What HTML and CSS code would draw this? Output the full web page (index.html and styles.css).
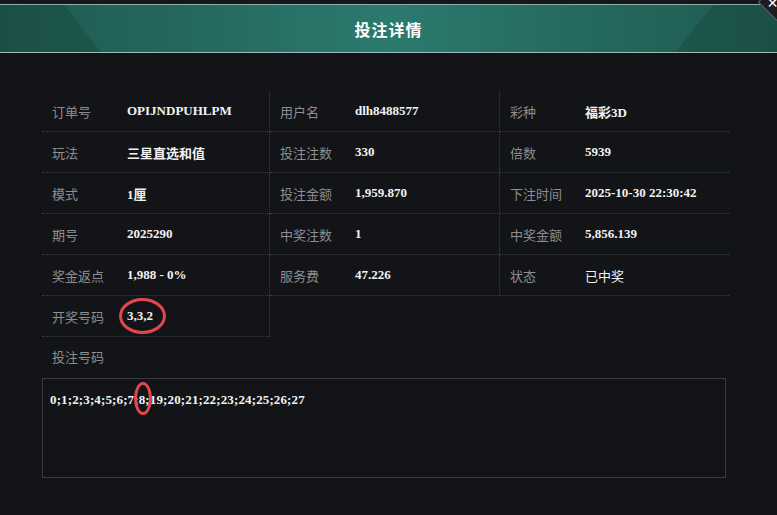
FILE: index.html
```html
<!DOCTYPE html>
<html lang="zh">
<head>
<meta charset="utf-8">
<title>投注详情</title>
<link rel="stylesheet" href="styles.css">
</head>
<body>
<div class="dialog">
  <div class="topstrip"></div>
  <header class="head">
    <span class="deco deco-l"></span>
    <span class="deco deco-r"></span>
    <h1 class="title">投注详情</h1>
  </header>
  <button class="close" aria-label="关闭"><span class="close-x">✕</span></button>

  <main class="body">
    <div class="grid">
      <div class="cell"><span class="lbl">订单号</span><span class="val">OPIJNDPUHLPM</span></div>
      <div class="cell"><span class="lbl">用户名</span><span class="val">dlh8488577</span></div>
      <div class="cell last"><span class="lbl">彩种</span><span class="val">福彩3D</span></div>

      <div class="cell"><span class="lbl">玩法</span><span class="val cjk">三星直选和值</span></div>
      <div class="cell"><span class="lbl">投注注数</span><span class="val">330</span></div>
      <div class="cell last"><span class="lbl">倍数</span><span class="val">5939</span></div>

      <div class="cell"><span class="lbl">模式</span><span class="val">1厘</span></div>
      <div class="cell"><span class="lbl">投注金额</span><span class="val">1,959.870</span></div>
      <div class="cell last"><span class="lbl">下注时间</span><span class="val">2025-10-30 22:30:42</span></div>

      <div class="cell"><span class="lbl">期号</span><span class="val">2025290</span></div>
      <div class="cell"><span class="lbl">中奖注数</span><span class="val">1</span></div>
      <div class="cell last"><span class="lbl">中奖金额</span><span class="val">5,856.139</span></div>

      <div class="cell"><span class="lbl">奖金返点</span><span class="val">1,988 - 0%</span></div>
      <div class="cell"><span class="lbl">服务费</span><span class="val">47.226</span></div>
      <div class="cell last"><span class="lbl">状态</span><span class="val status">已中奖</span></div>

      <div class="cell"><span class="lbl">开奖号码</span><span class="val mark-wrap">3,3,2<span class="ring ring-a"></span></span></div>
    </div>

    <div class="nums-label">投注号码</div>
    <div class="nums-box">
      <span class="nums">0;1;2;3;4;5;6;7;<span class="mark-wrap">8<span class="ring ring-b"></span></span>;19;20;21;22;23;24;25;26;27</span>
    </div>
  </main>
</div>
</body>
</html>
```

FILE: styles.css
```css
* { box-sizing: border-box; }
html, body {
  margin: 0;
  padding: 0;
  background: #121417;
  width: 777px;
  height: 515px;
  overflow: hidden;
}
body {
  font-family: "Noto Sans CJK SC", "Noto Sans", sans-serif;
}
.dialog {
  position: relative;
  width: 777px;
  height: 515px;
  background: #121417;
}
.topstrip {
  height: 4px;
  background: #16171d;
}
.head {
  position: relative;
  height: 49px;
  border-top: 1px solid #8fb0aa;
  border-bottom: 1px solid #9fb8b3;
  background: linear-gradient(to right, #1f5a51 0%, #24655b 20%, #2b7a6e 50%, #24665b 80%, #1f5a51 100%);
  display: flex;
  align-items: center;
  justify-content: center;
  overflow: hidden;
}
.deco {
  position: absolute;
  top: 0;
  bottom: 0;
  width: 110px;
  background: rgba(10, 40, 35, 0.2);
}
.deco-l {
  left: 0;
  clip-path: polygon(0 0, 64px 0, 101px 100%, 0 100%);
}
.deco-r {
  right: 0;
  clip-path: polygon(9px 100%, 46px 0, 110px 0, 110px 100%);
}
.title {
  position: relative;
  margin: 0;
  font-size: 16px;
  font-weight: 700;
  color: #ffffff;
  letter-spacing: 1px;
}
.close {
  position: absolute;
  top: -13px;
  right: -17px;
  width: 30px;
  height: 30px;
  padding: 0;
  transform: rotate(45deg);
  background: #1b1d22;
  border: 1px solid #5e6468;
  cursor: pointer;
}
.close-x {
  position: absolute;
  left: 4px;
  bottom: 2px;
  transform: rotate(-45deg);
  color: #ffffff;
  font-size: 14px;
  line-height: 1;
  font-family: "DejaVu Sans", sans-serif;
}

.body {
  padding: 38px 48px 0 42px;
}
.grid {
  display: grid;
  grid-template-columns: 228px 230px 229px;
  grid-auto-rows: 41px;
}
.cell {
  display: flex;
  align-items: center;
  padding-left: 10px;
  border-bottom: 1px dotted #3c3f44;
  border-right: 1px dotted #3c3f44;
}
.cell.last {
  border-right: none;
}
.lbl {
  width: 75px;
  flex: none;
  color: #8d8e90;
  font-size: 13px;
}
.val {
  color: #f2f2f2;
  font-family: "Liberation Serif", "Noto Sans CJK SC", serif;
  font-weight: 700;
  font-size: 13px;
}
.val.cjk {
  font-family: "Noto Sans CJK SC", sans-serif;
  font-weight: 700;
}
.val.status {
  font-family: "Noto Sans CJK SC", sans-serif;
  font-weight: 400;
}
.mark-wrap {
  position: relative;
}
.ring {
  position: absolute;
  border: 3px solid #e3474d;
  border-radius: 50%;
  pointer-events: none;
}
.ring-a {
  left: -8px;
  top: -10px;
  width: 47px;
  height: 36px;
}
.ring-b {
  left: -5px;
  top: -10px;
  width: 18px;
  height: 33px;
}
.nums-label {
  padding: 10px 0 0 10px;
  height: 41px;
  color: #8d8e90;
  font-size: 13px;
}
.nums-box {
  width: 684px;
  height: 100px;
  border: 1px solid #393b3f;
  padding: 8px 7px;
  line-height: 20px;
}
.nums {
  color: #f2f2f2;
  font-family: "Liberation Serif", serif;
  font-weight: 700;
  font-size: 13px;
  letter-spacing: 0.13px;
}
```
